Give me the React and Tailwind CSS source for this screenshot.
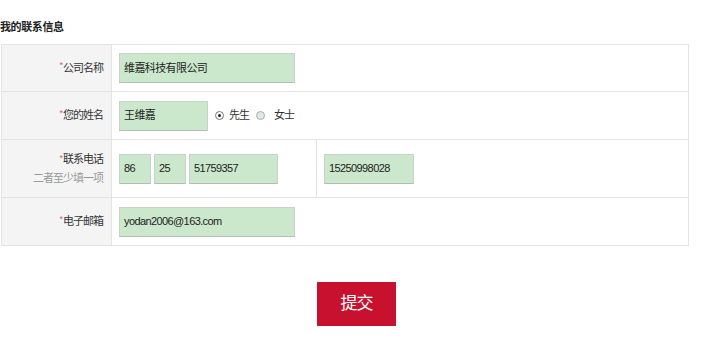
import React from "react";

const cjk = { fontFamily: '"Liberation Sans", "Noto Sans CJK SC", sans-serif' };

function Input({ w, value }) {
  return (
    <div
      className={`${w} h-[30px] flex items-center pl-[4px] bg-[#cce8cc] border border-[#c9d2c9] border-b-[#b7bdb7] text-[11px] text-[#222] tracking-[-0.6px]`}
    >
      {value}
    </div>
  );
}

function Star() {
  return <span className="text-[#d9547a] text-[9px] relative top-[-2px] mr-[1px]">*</span>;
}

function Label({ children }) {
  return (
    <div className="w-[110px] shrink-0 bg-[#f4f4f4] border-r border-[#e3e3e3] flex items-center justify-end pr-[8px] text-[11px] text-[#333] tracking-[-1px]">
      {children}
    </div>
  );
}

function Radio({ checked }) {
  return (
    <span
      className={`inline-flex items-center justify-center w-[9px] h-[9px] rounded-full border ${
        checked ? "border-[#777] bg-white" : "border-[#aab] bg-[#dfe9df]"
      }`}
    >
      {checked && <span className="w-[3px] h-[3px] rounded-full bg-[#222]" />}
    </span>
  );
}

export default function App() {
  return (
    <div className="w-[710px] h-[340px] bg-white" style={cjk}>
      <div className="pt-[20px] h-[44px] text-[11px] leading-[14px] font-bold text-[#222] tracking-[-0.4px]">
        我的联系信息
      </div>
      <div className="ml-px w-[688px] border border-[#e3e3e3]">
        <div className="flex h-[47px] border-b border-[#e3e3e3]">
          <Label>
            <Star />
            公司名称
          </Label>
          <div className="flex items-center pl-[7px]">
            <Input w="w-[176px]" value="维嘉科技有限公司" />
          </div>
        </div>
        <div className="flex h-[48px] border-b border-[#e3e3e3]">
          <Label>
            <Star />
            您的姓名
          </Label>
          <div className="flex items-center pl-[7px] text-[11px] text-[#333] tracking-[-1px]">
            <Input w="w-[89px]" value="王维嘉" />
            <span className="ml-[7px] flex items-center">
              <Radio checked />
            </span>
            <span className="ml-[5px]">先生</span>
            <span className="ml-[7px] flex items-center">
              <Radio />
            </span>
            <span className="ml-[9px]">女士</span>
          </div>
        </div>
        <div className="flex h-[58px] border-b border-[#e3e3e3]">
          <div className="w-[110px] shrink-0 bg-[#f4f4f4] border-r border-[#e3e3e3] flex flex-col items-end justify-center pr-[8px] text-[11px] leading-[18px] tracking-[-1px]">
            <div className="text-[#333]">
              <Star />
              联系电话
            </div>
            <div className="text-[#999]">二者至少填一项</div>
          </div>
          <div className="w-[205px] flex items-center pl-[7px] gap-[3px] border-r border-[#e3e3e3]">
            <Input w="w-[32px]" value="86" />
            <Input w="w-[32px]" value="25" />
            <Input w="w-[89px]" value="51759357" />
          </div>
          <div className="flex items-center pl-[7px]">
            <Input w="w-[90px]" value="15250998028" />
          </div>
        </div>
        <div className="flex h-[47px]">
          <Label>
            <Star />
            电子邮箱
          </Label>
          <div className="flex items-center pl-[7px]">
            <Input w="w-[176px]" value="yodan2006@163.com" />
          </div>
        </div>
      </div>
      <div className="mt-[36px] pl-[317px]">
        <div className="w-[79px] h-[44px] bg-[#c8102f] flex items-center justify-center text-white text-[17px] tracking-[-1px]">
          提交
        </div>
      </div>
    </div>
  );
}
